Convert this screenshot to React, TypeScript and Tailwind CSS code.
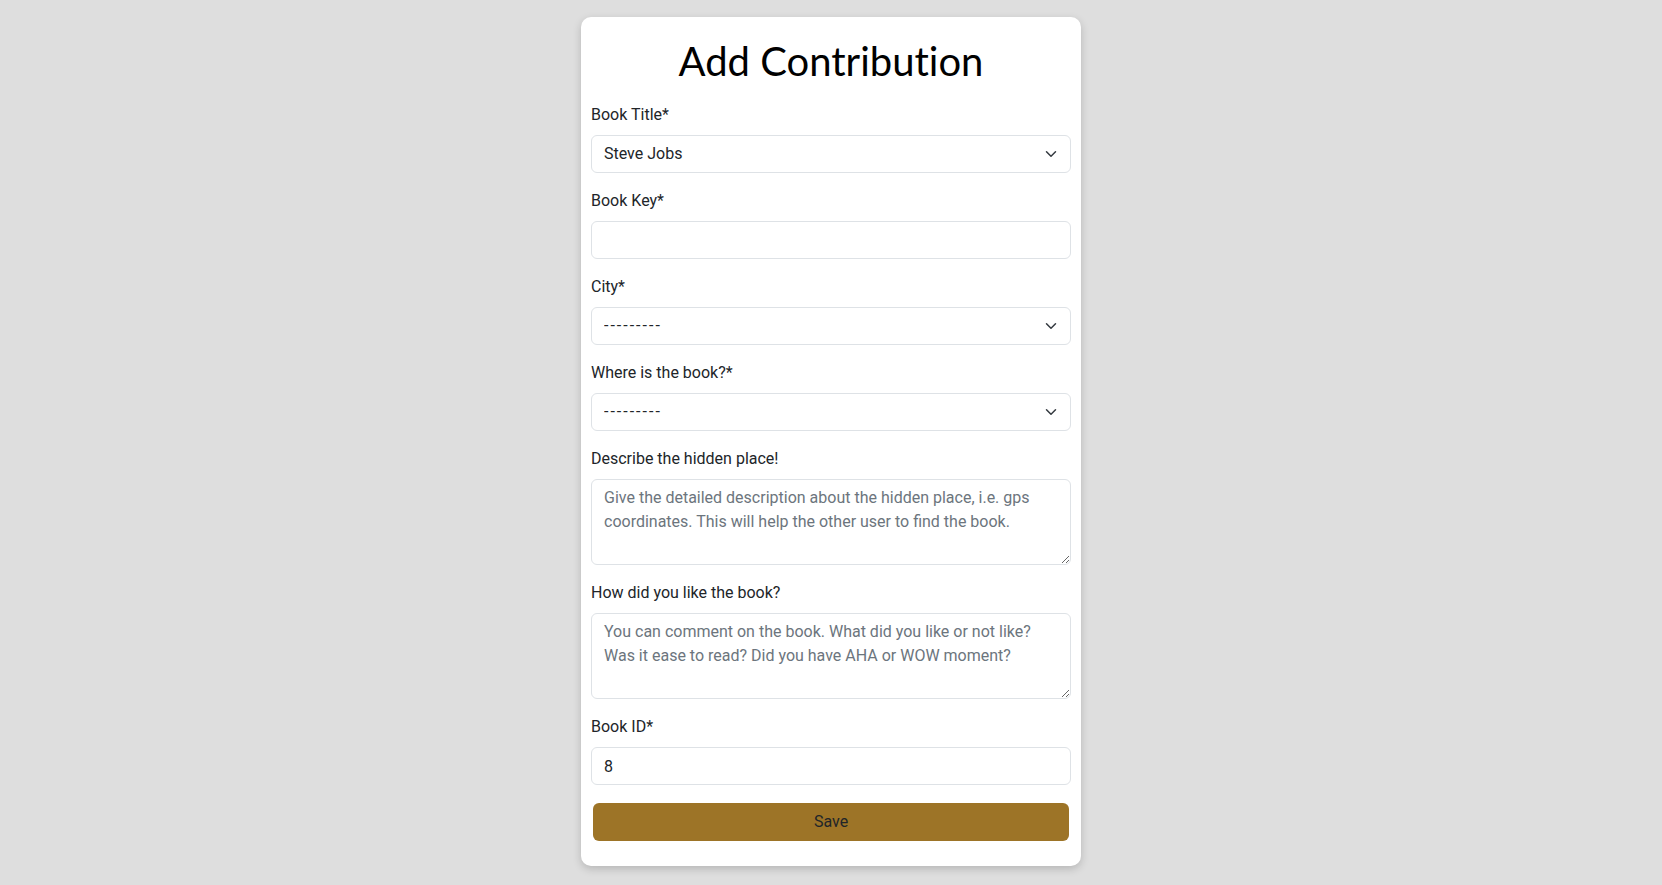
import { ChangeEvent, useState } from "react";

const font = { fontFamily: "Roboto, 'Liberation Sans', sans-serif" };

function Chevron() {
  return (
    <svg
      className="pointer-events-none absolute right-3 top-1/2 -translate-y-1/2"
      width="16"
      height="12"
      viewBox="0 0 16 16"
      fill="none"
      stroke="#343a40"
      strokeWidth="2"
      strokeLinecap="round"
      strokeLinejoin="round"
    >
      <path d="m2 5 6 6 6-6" />
    </svg>
  );
}

function Field({ label, children }: { label: string; children: React.ReactNode }) {
  return (
    <div className="mb-4">
      <label className="mb-2 block text-base leading-6 text-[#212529]">{label}</label>
      {children}
    </div>
  );
}

const controlCls =
  "block w-full h-[38px] rounded-md border border-[#dee2e6] bg-white px-3 py-1.5 text-base leading-6 text-[#212529] outline-none";

const areaCls =
  "block w-full h-[86px] resize-y rounded-md border border-[#dee2e6] bg-white px-3 py-1.5 text-base leading-6 text-[#212529] outline-none placeholder:text-[#6c757d]";

export default function App() {
  const [bookId, setBookId] = useState("8");

  return (
    <div className="min-h-screen bg-[#dedede] pt-[17px]" style={font}>
      <div className="mx-auto w-[500px] rounded-[10px] bg-white px-[10px] pb-[25px] shadow-[0_3px_8px_rgba(0,0,0,0.18)]">
        <h1
          className="pt-[16px] pb-[14px] text-center text-[40px] leading-[56px] text-black"
          style={{ fontFamily: "Lato, sans-serif", fontVariantLigatures: "none" }}
        >
          Add Contribution
        </h1>

        <Field label="Book Title*">
          <div className="relative">
            <select className={controlCls + " appearance-none pr-9"} defaultValue="steve">
              <option value="steve">Steve Jobs</option>
            </select>
            <Chevron />
          </div>
        </Field>

        <Field label="Book Key*">
          <input type="text" className={controlCls} />
        </Field>

        <Field label="City*">
          <div className="relative">
            <select className={controlCls + " appearance-none pr-9 tracking-[2px]"} defaultValue="">
              <option value="">---------</option>
            </select>
            <Chevron />
          </div>
        </Field>

        <Field label="Where is the book?*">
          <div className="relative">
            <select className={controlCls + " appearance-none pr-9 tracking-[2px]"} defaultValue="">
              <option value="">---------</option>
            </select>
            <Chevron />
          </div>
        </Field>

        <Field label="Describe the hidden place!">
          <textarea
            rows={3}
            className={areaCls}
            placeholder="Give the detailed description about the hidden place, i.e. gps coordinates. This will help the other user to find the book."
          />
        </Field>

        <Field label="How did you like the book?">
          <textarea
            rows={3}
            className={areaCls}
            placeholder="You can comment on the book. What did you like or not like? Was it ease to read? Did you have AHA or WOW moment?"
          />
        </Field>

        <div>
          <label className="mb-2 block text-base leading-6 text-[#212529]">Book ID*</label>
          <input
            type="text"
            className={controlCls}
            value={bookId}
            onChange={(e: ChangeEvent<HTMLInputElement>) => setBookId(e.target.value)}
          />
        </div>

        <button
          type="button"
          className="mx-[2px] mt-[18px] block h-[38px] w-[476px] rounded-md bg-[#9d7427] text-base text-[#212529]"
        >
          Save
        </button>
      </div>
    </div>
  );
}
